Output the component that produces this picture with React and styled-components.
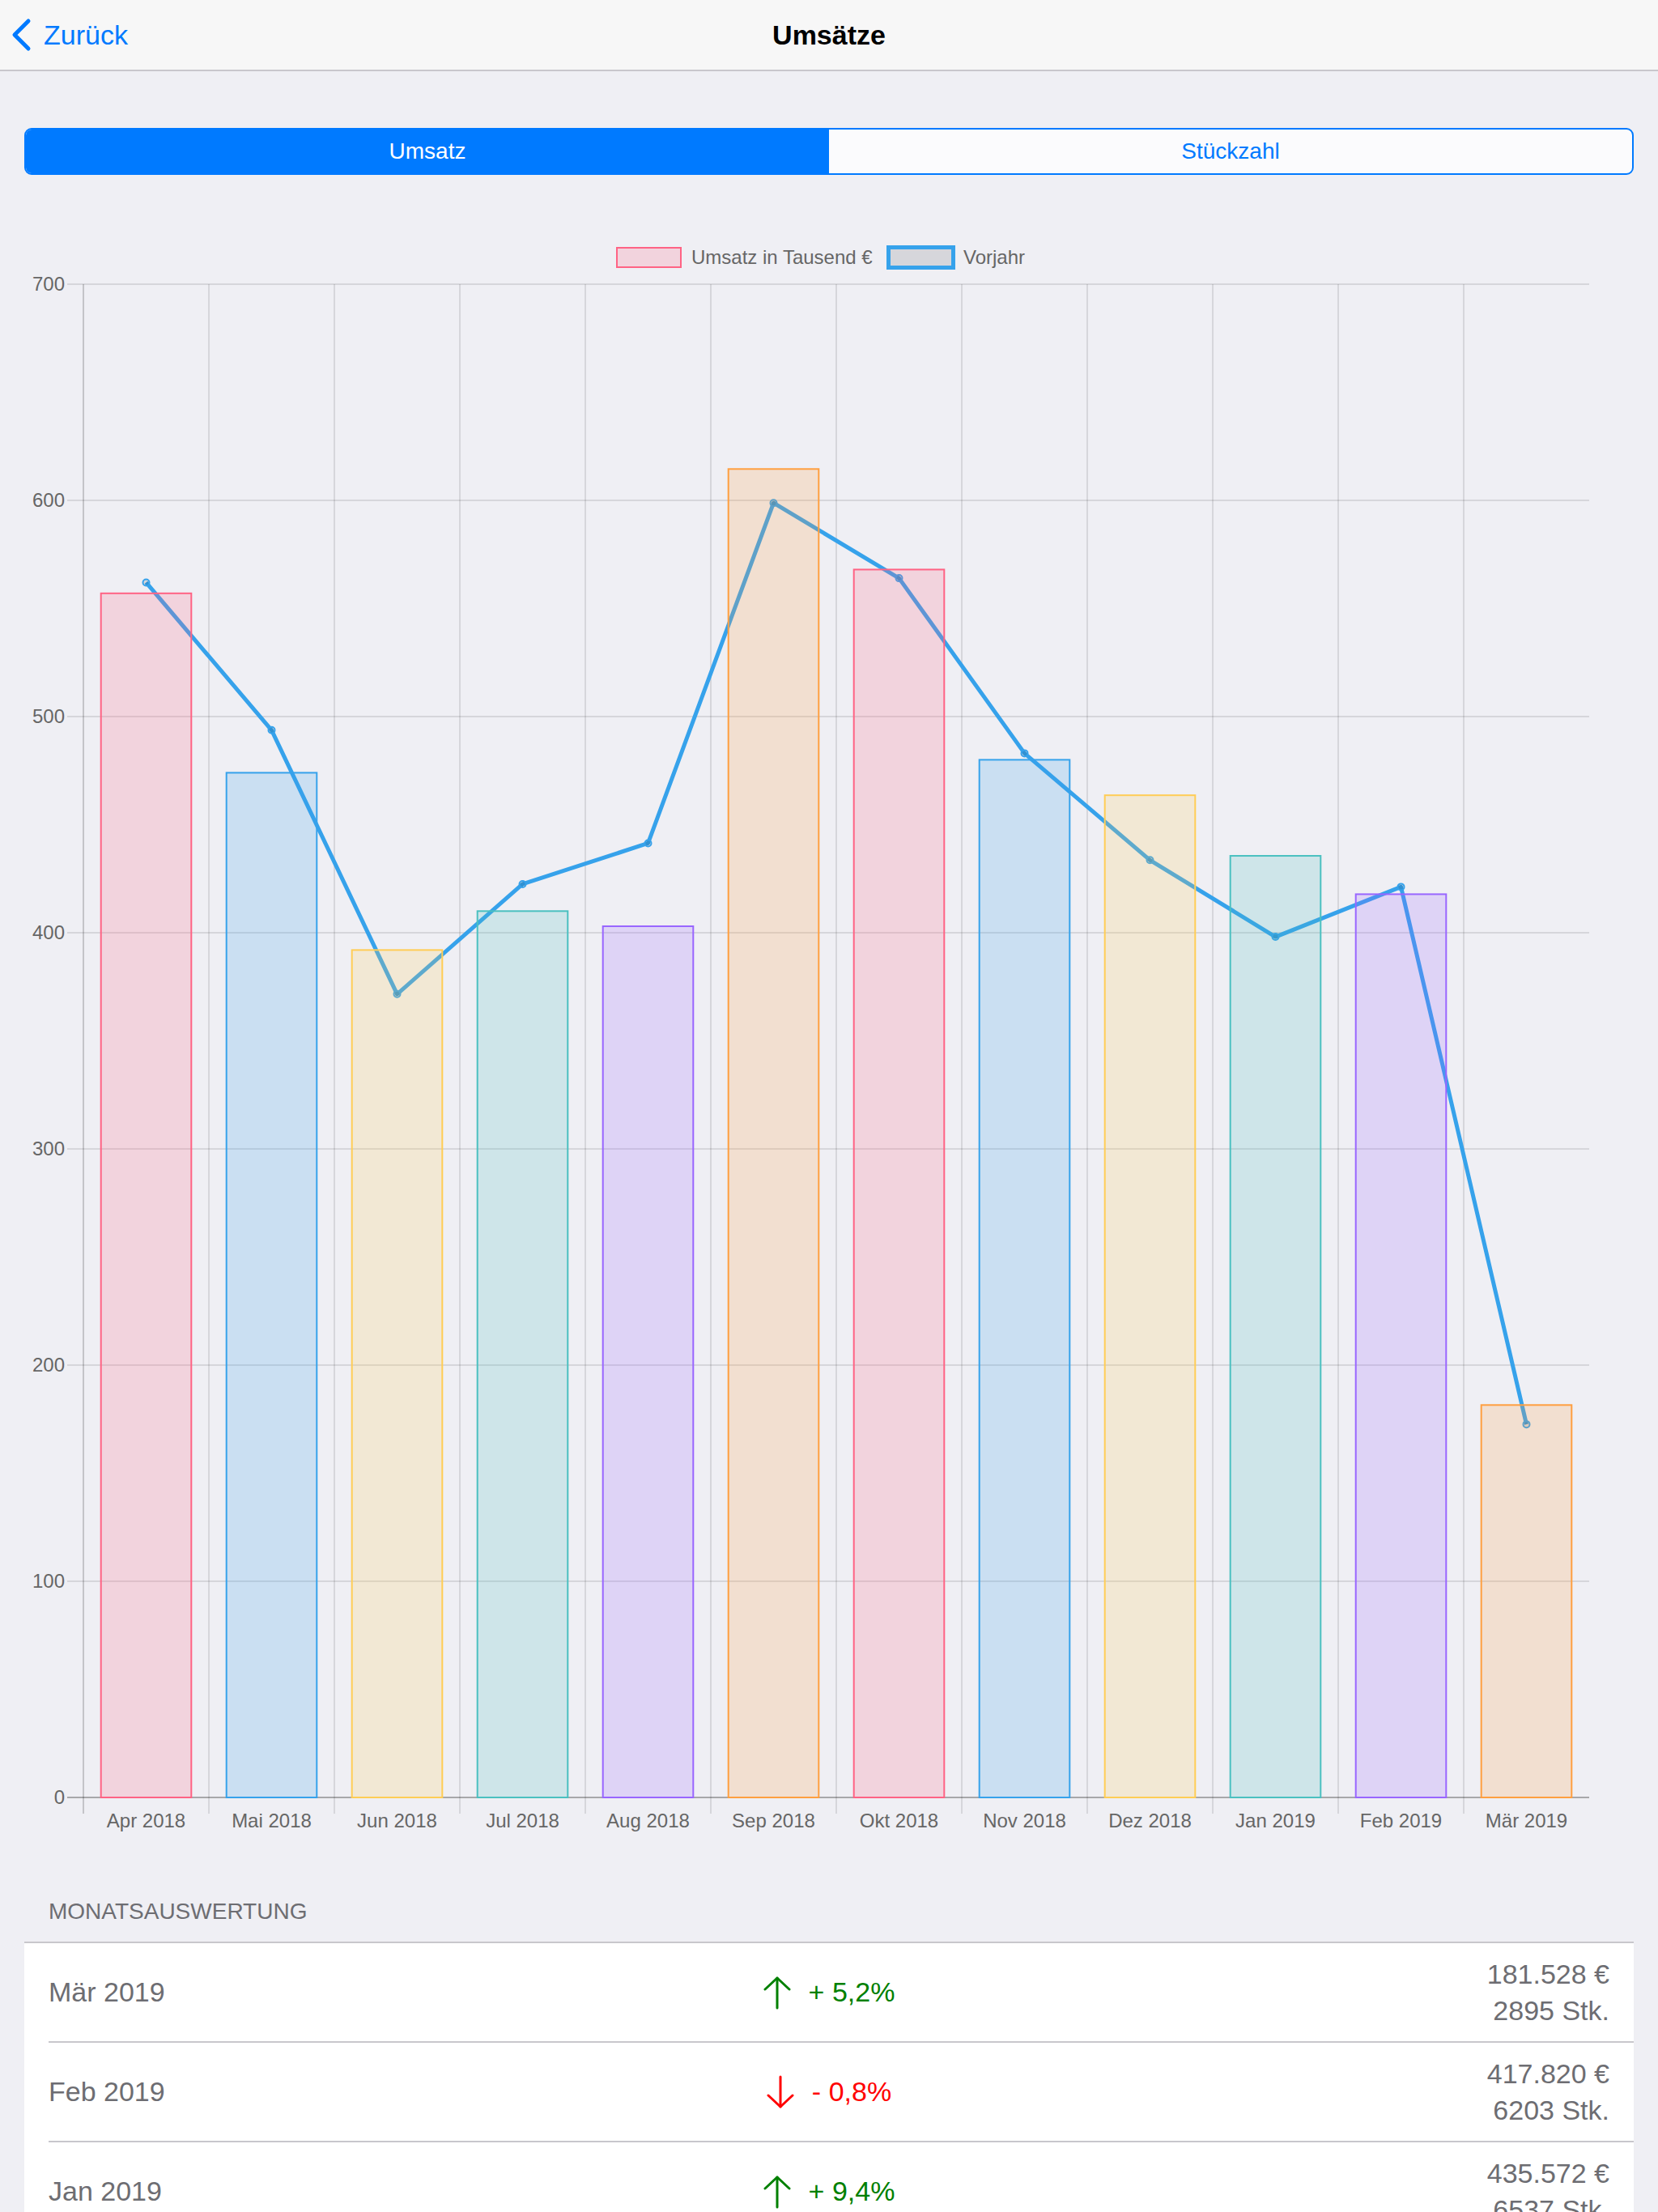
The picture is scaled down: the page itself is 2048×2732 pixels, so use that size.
import React, { useState } from 'react';
import styled, { createGlobalStyle } from 'styled-components';

const GlobalStyle = createGlobalStyle`
  html, body {
    margin: 0;
    padding: 0;
    overflow: hidden;
    background: #efeff4;
  }
  body {
    font-family: 'Liberation Sans', Arial, Helvetica, sans-serif;
    -webkit-font-smoothing: antialiased;
  }
`;

const months = [
  'Apr 2018', 'Mai 2018', 'Jun 2018', 'Jul 2018', 'Aug 2018', 'Sep 2018',
  'Okt 2018', 'Nov 2018', 'Dez 2018', 'Jan 2019', 'Feb 2019', 'Mär 2019',
];

// Umsatz in Tausend €
const sales = [557, 474, 392, 410, 403, 614.5, 568, 480, 463.6, 435.572, 417.82, 181.528];
const lastYear = [562, 493.7, 371.6, 422.5, 441.4, 598.8, 564, 483, 433.6, 398.1, 421.2, 172.6];

const palette = [
  [255, 99, 132],
  [54, 162, 235],
  [255, 205, 86],
  [75, 192, 192],
  [153, 102, 255],
  [255, 159, 64],
];

const rows = [
  { month: 'Mär 2019', up: true, change: '+ 5,2%', amount: '181.528 €', pieces: '2895 Stk.' },
  { month: 'Feb 2019', up: false, change: '- 0,8%', amount: '417.820 €', pieces: '6203 Stk.' },
  { month: 'Jan 2019', up: true, change: '+ 9,4%', amount: '435.572 €', pieces: '6537 Stk.' },
];

// plot area
const LEFT = 103;
const TOP = 351;
const BOTTOM = 2220;
const COL = 155;
const RIGHT = LEFT + COL * 12;
const MAX = 700;
const yOf = (v) => BOTTOM - (v / MAX) * (BOTTOM - TOP);
const xOf = (i) => LEFT + COL * (i + 0.5);
const BAR_W = COL * 0.72;

const Page = styled.div`
  width: 2048px;
  min-height: 2732px;
  background: #efeff4;
`;

const NavBar = styled.header`
  height: 86px;
  display: grid;
  grid-template-columns: 1fr auto 1fr;
  align-items: center;
  background: #f7f7f7;
  border-bottom: 2px solid #c8c7cc;
`;

const BackButton = styled.button`
  justify-self: start;
  display: flex;
  align-items: center;
  gap: 14px;
  margin-left: 14px;
  padding: 0;
  border: 0;
  background: none;
  color: #007aff;
  font-family: inherit;
  font-size: 34px;
  cursor: pointer;
`;

const NavTitle = styled.h1`
  margin: 0;
  font-size: 34px;
  font-weight: 700;
  color: #000;
`;

const SegmentBar = styled.div`
  display: flex;
  height: 58px;
  margin: 70px 30px 64px;
  box-sizing: border-box;
  border: 2px solid #007aff;
  border-radius: 9px;
  overflow: hidden;
  background: #fbfbfd;
`;

const Segment = styled.button`
  flex: 1;
  border: 0;
  padding: 0;
  font-family: inherit;
  font-size: 28px;
  color: ${(p) => (p.$active ? '#fff' : '#007aff')};
  background: ${(p) => (p.$active ? '#007aff' : 'transparent')};
  cursor: pointer;
`;

const ChartSvg = styled.svg`
  display: block;
  width: 2048px;
  height: 2000px;
  font-family: 'Liberation Sans', Arial, Helvetica, sans-serif;
`;

const SectionHeader = styled.h2`
  margin: 0;
  padding: 64px 60px 20px;
  font-size: 28px;
  line-height: 34px;
  font-weight: 400;
  color: #6d6d72;
`;

const Table = styled.div`
  margin: 0 30px;
  background: #fff;
  border-top: 2px solid #c8c7cc;
`;

const Row = styled.div`
  display: grid;
  grid-template-columns: 1fr auto 1fr;
  align-items: center;
  height: 121px;
  margin-left: 30px;
  padding-right: 30px;
  border-bottom: 2px solid #c8c7cc;
  font-size: 34px;
  color: #6d6d72;
`;

const MonthCell = styled.div`
  justify-self: start;
`;

const TrendCell = styled.div`
  display: flex;
  align-items: center;
  gap: 22px;
  color: ${(p) => (p.$up ? '#008000' : '#ff0000')};
`;

const AmountCell = styled.div`
  justify-self: end;
  text-align: right;
  line-height: 45px;
`;

function Chevron() {
  return (
    <svg width="26" height="42" viewBox="0 0 26 42">
      <polyline
        points="21,4 4,21 21,38"
        fill="none"
        stroke="#007aff"
        strokeWidth="5"
        strokeLinecap="round"
        strokeLinejoin="round"
      />
    </svg>
  );
}

function TrendArrow({ up }) {
  const color = up ? '#008000' : '#ff0000';
  return (
    <svg width="34" height="42" viewBox="0 0 34 42">
      <g fill="none" stroke={color} strokeWidth="3" strokeLinecap="round" strokeLinejoin="round">
        {up ? (
          <>
            <line x1="17" y1="3" x2="17" y2="40" />
            <polyline points="2,17 17,3 32,17" />
          </>
        ) : (
          <>
            <line x1="17" y1="2" x2="17" y2="39" />
            <polyline points="2,25 17,39 32,25" />
          </>
        )}
      </g>
    </svg>
  );
}

function SalesChart() {
  const ticks = [0, 100, 200, 300, 400, 500, 600, 700];
  const linePath = lastYear
    .map((v, i) => `${i === 0 ? 'M' : 'L'}${xOf(i)},${yOf(v)}`)
    .join(' ');

  return (
    <ChartSvg viewBox="0 280 2048 2000">
      {/* legend */}
      <rect x="762" y="306" width="79" height="24" fill="rgba(255,99,132,0.2)" stroke="rgb(255,99,132)" strokeWidth="2" />
      <text x="854" y="326" fontSize="24" fill="#666">Umsatz in Tausend €</text>
      <rect x="1097.5" y="305.5" width="80" height="25" fill="rgba(0,0,0,0.1)" stroke="rgb(54,162,235)" strokeWidth="5" />
      <text x="1190" y="326" fontSize="24" fill="#666">Vorjahr</text>

      {/* grid */}
      {ticks.map((t) => (
        <g key={t}>
          <line
            x1={LEFT - 20}
            x2={RIGHT}
            y1={yOf(t)}
            y2={yOf(t)}
            stroke={t === 0 ? 'rgba(0,0,0,0.3)' : 'rgba(0,0,0,0.1)'}
            strokeWidth="2"
          />
          <text x="80" y={yOf(t) + 8} fontSize="24" fill="#666" textAnchor="end">
            {t}
          </text>
        </g>
      ))}
      {months.map((m, i) => (
        <g key={m}>
          <line
            x1={LEFT + COL * i}
            x2={LEFT + COL * i}
            y1={TOP}
            y2={BOTTOM + 20}
            stroke={i === 0 ? 'rgba(0,0,0,0.18)' : 'rgba(0,0,0,0.1)'}
            strokeWidth="2"
          />
          <text x={xOf(i)} y="2257" fontSize="24" fill="#666" textAnchor="middle">
            {m}
          </text>
        </g>
      ))}

      {/* previous year */}
      <path d={linePath} fill="none" stroke="rgb(54,162,235)" strokeWidth="5" strokeLinejoin="round" />
      {lastYear.map((v, i) => (
        <circle key={i} cx={xOf(i)} cy={yOf(v)} r="4" fill="rgba(0,0,0,0.1)" stroke="rgb(54,162,235)" strokeWidth="2" />
      ))}

      {/* monthly sales */}
      {sales.map((v, i) => {
        const [r, g, b] = palette[i % palette.length];
        return (
          <rect
            key={i}
            x={xOf(i) - BAR_W / 2}
            y={yOf(v)}
            width={BAR_W}
            height={BOTTOM - yOf(v)}
            fill={`rgba(${r},${g},${b},0.2)`}
            stroke={`rgb(${r},${g},${b})`}
            strokeWidth="2"
          />
        );
      })}
    </ChartSvg>
  );
}

export default function App() {
  const [mode, setMode] = useState('umsatz');

  return (
    <Page>
      <GlobalStyle />
      <NavBar>
        <BackButton>
          <Chevron />
          Zurück
        </BackButton>
        <NavTitle>Umsätze</NavTitle>
        <div />
      </NavBar>

      <SegmentBar>
        <Segment $active={mode === 'umsatz'} onClick={() => setMode('umsatz')}>
          Umsatz
        </Segment>
        <Segment $active={mode === 'stueck'} onClick={() => setMode('stueck')}>
          Stückzahl
        </Segment>
      </SegmentBar>

      <SalesChart />

      <SectionHeader>MONATSAUSWERTUNG</SectionHeader>
      <Table>
        {rows.map((r) => (
          <Row key={r.month}>
            <MonthCell>{r.month}</MonthCell>
            <TrendCell $up={r.up}>
              <TrendArrow up={r.up} />
              {r.change}
            </TrendCell>
            <AmountCell>
              {r.amount}
              <br />
              {r.pieces}
            </AmountCell>
          </Row>
        ))}
      </Table>
    </Page>
  );
}
